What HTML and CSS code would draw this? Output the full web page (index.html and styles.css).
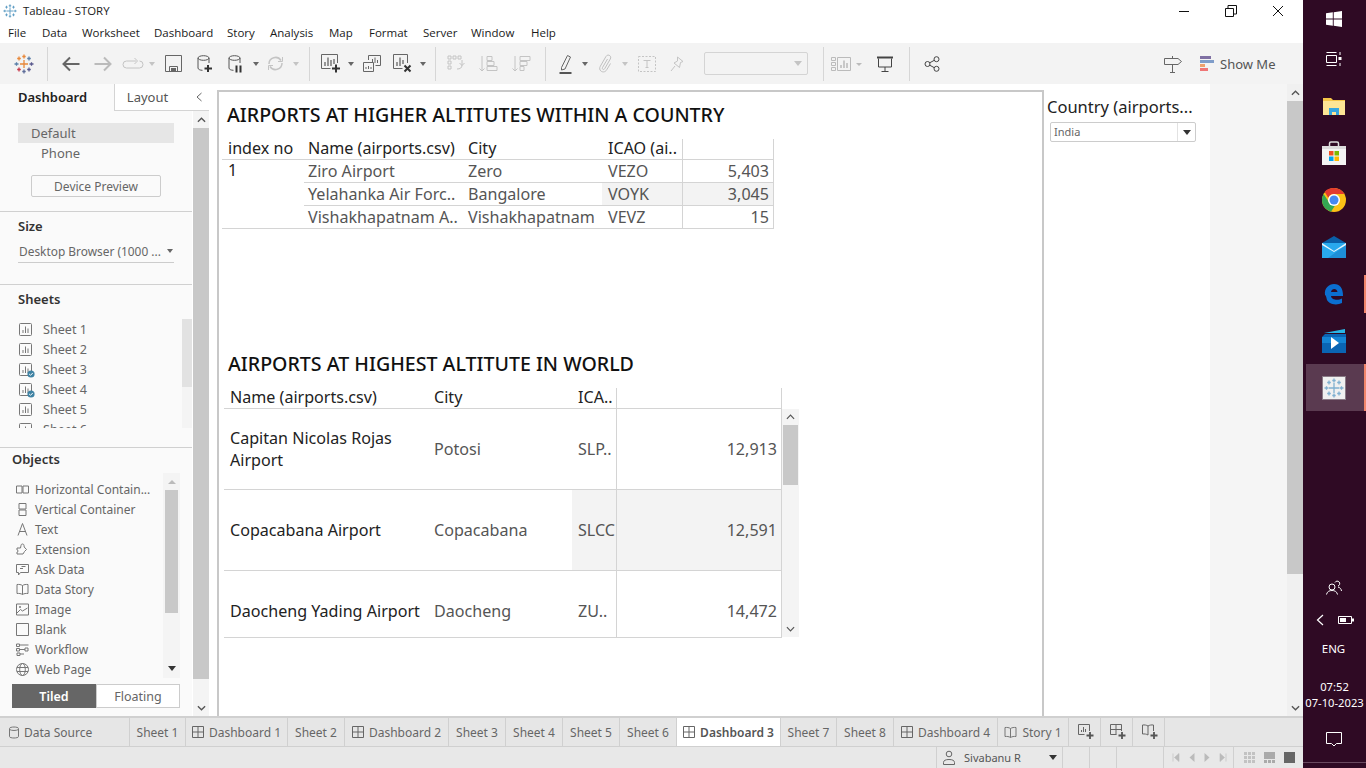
FILE: index.html
```html
<!DOCTYPE html>
<html lang="en">
<head>
<meta charset="utf-8">
<title>Tableau - STORY</title>
<link rel="stylesheet" href="styles.css">
</head>
<body>
<svg class="defs" width="0" height="0" aria-hidden="true">
  <symbol id="bars" viewBox="0 0 13 13"><rect x=".5" y=".5" width="12" height="12" rx="1" fill="none" stroke="#777"/><path d="M4 10V7M6.5 10V3.5M9 10V5.5" stroke="#777" fill="none"/></symbol>
  <symbol id="dash" viewBox="0 0 12 12"><path d="M.5.5h11v11H.5zM6 .5v11M.5 6h11" fill="none" stroke="#666"/></symbol>
  <symbol id="check" viewBox="0 0 8 8"><circle cx="4" cy="4" r="3.6" fill="#3e82a3"/><path d="M2.2 4l1.3 1.3 2.3-2.4" stroke="#fff" fill="none"/></symbol>
  <symbol id="story" viewBox="0 0 13 13"><path d="M6.5 2.5C5 1.500 3 1.300 1 1.500v9c2-.2 4 0 5.500 1 1.500-1 3.500-1.200 5.500-1v-9c-2-.2-4 0-5.500 1zM6.500 2.500v9" fill="none" stroke="#777"/></symbol>
  <symbol id="logo" viewBox="0 0 20 20"><path d="M10 5v10M5 10h10M10 .5v4M8.300 2.500h3.400M10 15.500v4M8.300 17.500h3.400M.5 10h4M2.500 8.300v3.400M15.500 10h4M17.500 8.300v3.400M5 2.500v4M3.200 4.500h3.600M15 2.500v4M13.200 4.500h3.600M5 13.500v4M3.200 15.500h3.600M15 13.500v4M13.200 15.500h3.600" fill="none" stroke="currentColor" stroke-width="1.300"/></symbol>
  <symbol id="cyl" viewBox="0 0 16 18"><ellipse cx="6.500" cy="3" rx="5.500" ry="2.300" fill="none" stroke="#555"/><path d="M1 3v10c0 1.300 2 2.300 4.500 2.300M12 3v5" fill="none" stroke="#555"/></symbol>
</svg>

<div class="screen">
  <div class="app">
    <header class="titlebar">
      <div class="title-left"><svg class="ic20 logo-pale"><use href="#logo"/></svg><span>Tableau - STORY</span></div>
      <div class="winctl">
        <svg class="ic12" viewBox="0 0 12 12"><path d="M1 6.500h10" stroke="#111" fill="none"/></svg>
        <svg class="ic12" viewBox="0 0 12 12"><path d="M.5 3.500h8v8h-8zM3 3.500V.5h8.500v8.500H8.500" stroke="#111" fill="none"/></svg>
        <svg class="ic12" viewBox="0 0 12 12"><path d="M1 1l10 10M11 1L1 11" stroke="#111" fill="none"/></svg>
      </div>
    </header>
    <nav class="menubar">
      <span class="m-file">File</span><span class="m-data">Data</span><span class="m-work">Worksheet</span><span class="m-dash">Dashboard</span><span class="m-story">Story</span><span class="m-ana">Analysis</span><span class="m-map">Map</span><span class="m-fmt">Format</span><span class="m-srv">Server</span><span class="m-win">Window</span><span>Help</span>
    </nav>
    <div class="toolbar">
      <div class="tools">
        <div class="tool"><svg width="20" height="20" viewBox="0 0 20 20"><path d="M10 6v8M6 10h8" stroke="#e8883a" stroke-width="1.300"/><path d="M5 2.500v4M3.200 4.500h3.600M10 .5v4M8.300 2.500h3.400" stroke="#e8883a" stroke-width="1.300"/><path d="M15 2.500v4M13.200 4.500h3.600M.5 10h4M2.500 8.300v3.400" stroke="#5b7fa8" stroke-width="1.300"/><path d="M5 13.500v4M3.200 15.500h3.600" stroke="#c8384a" stroke-width="1.300"/><path d="M10 15.500v4M8.300 17.500h3.400" stroke="#5d6c99" stroke-width="1.300"/><path d="M15 13.500v4M13.200 15.500h3.600M15.500 10h4M17.500 8.300v3.400" stroke="#5b5a8f" stroke-width="1.300"/></svg></div>
        <i class="sep"></i>
        <div class="tool"><svg width="18" height="16" viewBox="0 0 18 16"><path d="M8 1.500L1.500 8 8 14.500M1.500 8h16" fill="none" stroke="#666" stroke-width="2"/></svg></div>
        <div class="tool"><svg width="18" height="16" viewBox="0 0 18 16"><path d="M10 1.500L16.500 8 10 14.500M16.500 8H.5" fill="none" stroke="#bbb" stroke-width="2"/></svg></div>
        <div class="tool"><svg width="20" height="14" viewBox="0 0 20 14"><path d="M13 4H3.500a2.500 2.500 0 0 0 0 7h13a2.500 2.500 0 0 0 0-7M11.500 1l3 3-3 3" fill="none" stroke="#c4c4c4"/></svg></div>
        <div class="tool"><i class="caret off"></i></div>
        <div class="tool"><svg width="17" height="17" viewBox="0 0 17 17"><path d="M.5.5h16v16H.5zM4.500 16.500v-5h8v5" fill="none" stroke="#666"/><path d="M6 13h5v3.500H6z" fill="#666"/></svg></div>
        <div class="tool"><svg width="16" height="18" viewBox="0 0 16 18"><use href="#cyl"/><path d="M11 10v7M7.500 13.500h7.500" stroke="#333" stroke-width="2"/></svg></div>
        <div class="tool"><svg width="16" height="18" viewBox="0 0 16 18"><use href="#cyl"/><path d="M8.500 10.500v7M12.500 10.500v7" stroke="#333" stroke-width="2"/></svg></div>
        <div class="tool"><i class="caret"></i></div>
        <div class="tool"><svg width="17" height="17" viewBox="0 0 17 17"><path d="M2 9a6.500 6.500 0 0 1 12-3.500M15 8a6.500 6.500 0 0 1-12 3.500" fill="none" stroke="#c4c4c4" stroke-width="1.500"/><path d="M15.500 2v4.500H11M1.500 15v-4.500H6" fill="none" stroke="#c4c4c4"/></svg></div>
        <div class="tool"><i class="caret off"></i></div>
        <i class="sep"></i>
        <div class="tool"><svg width="20" height="19" viewBox="0 0 20 19"><path d="M16.500 9V.5H.5v14h9" fill="none" stroke="#666"/><path d="M4 12V8M7 12V3.500M10 12V6M13 10V5" stroke="#666" stroke-width="1.300"/><path d="M15 10.500v8M11 14.500h8" stroke="#333" stroke-width="2"/></svg></div>
        <div class="tool"><i class="caret"></i></div>
        <div class="tool"><svg width="18" height="17" viewBox="0 0 18 17"><path d="M5.500 5V.5h12v10h-5" fill="none" stroke="#666"/><path d="M.5 7.500h10v9H.5z" fill="#f3f3f3" stroke="#666"/><path d="M3 14v-2M5.500 14v-3M8 14v-2M9.500 8V4M12 8V2.500M14.500 8V5" stroke="#666"/></svg></div>
        <div class="tool"><svg width="20" height="19" viewBox="0 0 20 19"><path d="M14.500 9V.5H.5v14h9" fill="none" stroke="#666"/><path d="M4 12V8M7 12V3.500M10 10V6" stroke="#666" stroke-width="1.300"/><path d="M11.500 11.500l6 6M17.500 11.500l-6 6" stroke="#333" stroke-width="2"/></svg></div>
        <div class="tool"><i class="caret"></i></div>
        <i class="sep"></i>
        <div class="tool"><svg width="20" height="18" viewBox="0 0 20 18"><path d="M1 1h3v3H1zM6 1h3v3H6zM11 1h3v3h-3zM1 6h3v3H1zM1 11h3v3H1z" fill="none" stroke="#c4c4c4"/><path d="M15 5v5c0 3-2 4-5 4M12.500 8l2.500 2.500L17.500 8" fill="none" stroke="#c4c4c4"/></svg></div>
        <div class="tool"><svg width="19" height="18" viewBox="0 0 19 18"><path d="M3 1v15M.5 13.500L3 16l2.500-2.500" fill="none" stroke="#c4c4c4"/><path d="M8 1.500h5v4H8zM8 6.500h7v4H8zM8 11.500h10v4H8z" fill="none" stroke="#c4c4c4"/></svg></div>
        <div class="tool"><svg width="19" height="18" viewBox="0 0 19 18"><path d="M3 1v15M.5 13.500L3 16l2.500-2.500" fill="none" stroke="#c4c4c4"/><path d="M8 1.500h10v4H8zM8 6.500h7v4H8zM8 11.500h4v4H8z" fill="none" stroke="#c4c4c4"/></svg></div>
        <i class="sep"></i>
        <div class="tool"><svg width="14" height="20" viewBox="0 0 14 20"><path d="M2.500 13.500L8.500 1.500l3 1.500-5.500 12-3.500 1z" fill="none" stroke="#666"/><path d="M.5 19h12" stroke="#555" stroke-width="2"/></svg></div>
        <div class="tool"><i class="caret"></i></div>
        <div class="tool"><svg width="14" height="20" viewBox="0 0 14 20"><path d="M9.500 5L4.500 13.500c-.9 1.600 1.300 2.800 2.200 1.200L12.300 5c1.800-3.200-2.600-5.600-4.400-2.400L2.300 12.300c-2.600 4.600 3.800 8 6.400 3.500l3.800-6.300" fill="none" stroke="#c0c0c0"/></svg></div>
        <div class="tool"><i class="caret off"></i></div>
        <div class="tool"><svg width="18" height="16" viewBox="0 0 18 16"><path d="M.5.5h17v15H.5z" fill="none" stroke="#c4c4c4" stroke-dasharray="2 1.500"/><path d="M5.500 4.500h7M9 4.500v7M7.500 11.500h3" fill="none" stroke="#c4c4c4"/></svg></div>
        <div class="tool"><svg width="14" height="16" viewBox="0 0 14 16"><path d="M7.500 1l5.500 4.500-2.500 1-1 5-5.500-4.500 3.500-2zM5 10l-4 5" fill="none" stroke="#c4c4c4"/></svg></div>
        <div class="tool"><div class="combo"><i class="caret off"></i></div></div>
        <i class="sep"></i>
        <div class="tool"><svg width="34" height="14" viewBox="0 0 34 14"><path d="M.5.5h4v3h-4zM.5 5.500h4v3h-4zM.5 10.500h4v3h-4zM6.500.5h13v13h-13z" fill="none" stroke="#bbb"/><path d="M10 11V8M13 11V3.500M16 11V6" stroke="#bbb" stroke-width="1.500"/><path d="M25 6h6l-3 3z" fill="#bbb"/></svg></div>
        <div class="tool"><svg width="16" height="16" viewBox="0 0 16 16"><path d="M0 1.500h16" stroke="#444" stroke-width="2"/><path d="M1.500 2.500v8.500h13V2.500M8 11v4M4.500 15.500h7" fill="none" stroke="#444"/></svg></div>
        <i class="sep"></i>
        <div class="tool"><svg width="16" height="16" viewBox="0 0 16 16"><circle cx="3.500" cy="8" r="2.500" fill="none" stroke="#444"/><circle cx="12.500" cy="3.200" r="2.500" fill="none" stroke="#444"/><circle cx="12.500" cy="12.800" r="2.500" fill="none" stroke="#444"/><path d="M5.700 6.800l4.600-2.500M5.700 9.200l4.600 2.500" stroke="#444"/></svg></div>
      </div>
      <div class="tools-right">
        <svg class="sign" width="18" height="18" viewBox="0 0 18 18"><path d="M.5 3.500h13.500l3.500 3-3.500 3H.5zM8.500 1v2.500M8.500 9.500v8M6 17.500h5" fill="none" stroke="#666"/></svg>
        <div class="showme">
          <svg width="14" height="15" viewBox="0 0 14 15"><rect width="11" height="3" fill="#7f70a3"/><rect y="4" width="14" height="3" fill="#7f9dc9"/><rect y="8" width="5" height="3" fill="#eda16e"/><rect y="12" width="8" height="3" fill="#ef7676"/></svg>
          <span>Show Me</span>
        </div>
      </div>
    </div>

    <main class="main">
      <aside class="side">
        <div class="side-tabs">
          <div class="stab stab-on">Dashboard</div>
          <div class="stab stab-off">Layout</div>
          <div class="stab-col"><svg width="8" height="10" viewBox="0 0 8 10"><path d="M6.500 1L2 5l4.500 4" fill="none" stroke="#666"/></svg></div>
        </div>
        <div class="side-body">
          <div class="panels">
            <section class="panel p-dev">
              <div class="dev-on">Default</div>
              <div class="dev-phone">Phone</div>
              <button class="dev-btn">Device Preview</button>
            </section>
            <section class="panel p-size">
              <h3>Size</h3>
              <div class="size-sel"><span>Desktop Browser (1000 ...</span><i class="caret"></i></div>
            </section>
            <section class="panel p-sheets">
              <h3>Sheets</h3>
              <div class="sheet-wrap">
                <ul class="sheet-list">
                  <li><span class="sic"><svg class="ic13"><use href="#bars"/></svg></span>Sheet 1</li>
                  <li><span class="sic"><svg class="ic13"><use href="#bars"/></svg></span>Sheet 2</li>
                  <li><span class="sic"><svg class="ic13"><use href="#bars"/></svg><svg class="badge"><use href="#check"/></svg></span>Sheet 3</li>
                  <li><span class="sic"><svg class="ic13"><use href="#bars"/></svg><svg class="badge"><use href="#check"/></svg></span>Sheet 4</li>
                  <li><span class="sic"><svg class="ic13"><use href="#bars"/></svg></span>Sheet 5</li>
                  <li><span class="sic"><svg class="ic13"><use href="#bars"/></svg></span>Sheet 6</li>
                </ul>
                <div class="mini-track"><div class="mini-thumb"></div></div>
              </div>
            </section>
            <section class="panel p-obj">
              <h3>Objects</h3>
              <div class="obj-wrap">
                <ul class="obj-list">
                  <li><svg class="ic13" viewBox="0 0 13 13"><path d="M.5 3h5.500v7H.5zM7 3h5.500v7H7z" fill="none" stroke="#777"/></svg>Horizontal Contain...</li>
                  <li><svg class="ic13" viewBox="0 0 13 13"><path d="M3 .5h7v5.500H3zM3 7h7v5.500H3z" fill="none" stroke="#777"/></svg>Vertical Container</li>
                  <li><svg class="ic13" viewBox="0 0 13 13"><path d="M2 12.500L6.500.5l4.500 12M3.500 8.500h6" fill="none" stroke="#777"/></svg>Text</li>
                  <li><svg class="ic13" viewBox="0 0 13 13"><path d="M5 2.500c0-2 3-2 3 0l.2 1.500 2.300 2.500-2 2-1.500 2.500H1v-2c1.500 0 1.500-2 0-2V5h3.500z" fill="none" stroke="#777"/></svg>Extension</li>
                  <li><svg class="ic13" viewBox="0 0 13 13"><path d="M.5 1.500h12v8h-8l-2 2.500V9.500h-2zM4 5.500h3M5.500 3.500h4" fill="none" stroke="#777"/></svg>Ask Data</li>
                  <li><svg class="ic13"><use href="#story"/></svg>Data Story</li>
                  <li><svg class="ic13" viewBox="0 0 13 13"><path d="M.5 1h12v11H.5zM1 10l3.500-3.500 2 1.500 5-3" fill="none" stroke="#777"/><circle cx="4" cy="4" r="1" fill="#777"/></svg>Image</li>
                  <li><svg class="ic13" viewBox="0 0 13 13"><path d="M.5.5h12v12H.5z" fill="none" stroke="#777"/></svg>Blank</li>
                  <li><svg class="ic13" viewBox="0 0 13 13"><path d="M.5 1h3v2.500h-3zM.5 5.500h3V8h-3zM1 10h3v2.500H1zM3.500 2h9M3.500 6.500H9M4 11h4M9 5h3v3H9z" fill="none" stroke="#777"/></svg>Workflow</li>
                  <li><svg class="ic13" viewBox="0 0 13 13"><circle cx="6.500" cy="6.500" r="6" fill="none" stroke="#777"/><ellipse cx="6.500" cy="6.500" rx="2.800" ry="6" fill="none" stroke="#777"/><path d="M1 4.500h11M1 8.500h11" stroke="#777"/></svg>Web Page</li>
                </ul>
                <div class="obj-scroll">
                  <i class="tri-up"></i>
                  <div class="obj-thumb"></div>
                  <i class="caret dark"></i>
                </div>
              </div>
              <div class="seg"><div class="seg-on">Tiled</div><div class="seg-off">Floating</div></div>
            </section>
          </div>
          <div class="vscroll side-scroll">
            <svg class="chev" viewBox="0 0 10 6"><path d="M1 5l4-4 4 4" fill="none" stroke="#555" stroke-width="1.500"/></svg>
            <div class="thumb side-thumb"></div>
            <svg class="chev chev-b" viewBox="0 0 10 6"><path d="M1 1l4 4 4-4" fill="none" stroke="#555" stroke-width="1.500"/></svg>
          </div>
        </div>
      </aside>

      <div class="canvas">
        <h2 class="vtitle t1">AIRPORTS AT HIGHER ALTITUTES WITHIN A COUNTRY</h2>
        <div class="tbl1">
          <div class="c hd">index no</div><div class="c hd">Name (airports.csv)</div><div class="c hd">City</div><div class="c hd ic">ICAO (ai..</div><div class="c hd val"></div>
          <div class="c idx">1</div>
          <div class="c">Ziro Airport</div><div class="c">Zero</div><div class="c ic">VEZO</div><div class="c val">5,403</div>
          <div class="c">Yelahanka Air Forc..</div><div class="c">Bangalore</div><div class="c ic hov">VOYK</div><div class="c val hov">3,045</div>
          <div class="c">Vishakhapatnam A..</div><div class="c">Vishakhapatnam</div><div class="c ic">VEVZ</div><div class="c val">15</div>
        </div>
        <h2 class="vtitle t2">AIRPORTS AT HIGHEST ALTITUTE IN WORLD</h2>
        <div class="tbl2-wrap">
          <div class="tbl2">
            <div class="d hd">Name (airports.csv)</div><div class="d hd">City</div><div class="d hd">ICA..</div><div class="d hd dval"></div>
            <div class="d nm r1">Capitan Nicolas Rojas Airport</div><div class="d ct r1">Potosi</div><div class="d ct r1">SLP..</div><div class="d ct dval r1">12,913</div>
            <div class="d nm r1">Copacabana Airport</div><div class="d ct r1">Copacabana</div><div class="d ct r1 hov">SLCC</div><div class="d ct dval r1 hov">12,591</div>
            <div class="d nm r3">Daocheng Yading Airport</div><div class="d ct r3">Daocheng</div><div class="d ct r3">ZU..</div><div class="d ct dval r3">14,472</div>
          </div>
          <div class="tscroll">
            <svg class="chev" viewBox="0 0 10 6"><path d="M1 5l4-4 4 4" fill="none" stroke="#555" stroke-width="1.300"/></svg>
            <div class="tscroll-thumb"></div>
            <svg class="chev chev-b" viewBox="0 0 10 6"><path d="M1 1l4 4 4-4" fill="none" stroke="#555" stroke-width="1.300"/></svg>
          </div>
        </div>
      </div>

      <div class="filter">
        <div class="f-title">Country (airports...</div>
        <div class="f-sel"><span class="f-val">India</span><span class="f-btn"><i class="caret dark"></i></span></div>
      </div>
      <div class="gutter"></div>
      <div class="vscroll page-scroll">
        <svg class="chev" viewBox="0 0 10 6"><path d="M1 5l4-4 4 4" fill="none" stroke="#555" stroke-width="1.500"/></svg>
        <div class="thumb page-thumb"></div>
        <svg class="chev chev-b" viewBox="0 0 10 6"><path d="M1 1l4 4 4-4" fill="none" stroke="#555" stroke-width="1.500"/></svg>
      </div>
    </main>

    <div class="tabs">
      <div class="tab t-src"><svg width="10" height="13" viewBox="0 0 10 13"><path d="M.5 2.500C.5.500 9.500.500 9.500 2.500v8c0 2-9 2-9 0zM.5 3.500c2 1.300 7 1.300 9 0" fill="none" stroke="#777"/></svg>Data Source</div>
      <div class="tab t-s1">Sheet 1</div>
      <div class="tab t-d1"><svg class="ic12"><use href="#dash"/></svg>Dashboard 1</div>
      <div class="tab t-s">Sheet 2</div>
      <div class="tab t-d"><svg class="ic12"><use href="#dash"/></svg>Dashboard 2</div>
      <div class="tab t-s">Sheet 3</div>
      <div class="tab t-s">Sheet 4</div>
      <div class="tab t-s">Sheet 5</div>
      <div class="tab t-s">Sheet 6</div>
      <div class="tab t-d t-on"><svg class="ic12"><use href="#dash"/></svg>Dashboard 3</div>
      <div class="tab t-s1">Sheet 7</div>
      <div class="tab t-s">Sheet 8</div>
      <div class="tab t-d"><svg class="ic12"><use href="#dash"/></svg>Dashboard 4</div>
      <div class="tab t-st"><svg class="ic13"><use href="#story"/></svg>Story 1</div>
      <div class="tab t-add"><svg width="16" height="16" viewBox="0 0 16 16"><path d="M11.500 7V.5H.5v10h6" fill="none" stroke="#666"/><path d="M3.500 8V6M5.500 8V3M7.500 8V5" stroke="#666"/><path d="M12 8v7M8.500 11.500h7" stroke="#555" stroke-width="1.800"/></svg></div>
      <div class="tab t-add"><svg width="16" height="16" viewBox="0 0 16 16"><path d="M11.500 7V.5H.5v10h6M6 .5v10M.5 5.500h11" fill="none" stroke="#666"/><path d="M12 8v7M8.500 11.500h7" stroke="#555" stroke-width="1.800"/></svg></div>
      <div class="tab t-add"><svg width="16" height="16" viewBox="0 0 16 16"><path d="M6 2C4.500 1 2.500.8.500 1v9c2-.2 4 0 5.500 1M6 2c1.500-1 3.500-1.200 5.500-1v6M6 2v9" fill="none" stroke="#666"/><path d="M12 8v7M8.500 11.500h7" stroke="#555" stroke-width="1.800"/></svg></div>
    </div>
    <footer class="status">
      <div class="st-user">
        <svg width="14" height="15" viewBox="0 0 14 15"><circle cx="7" cy="4" r="2.800" fill="none" stroke="#666"/><path d="M1.500 14.500v-2c0-2 2-3 5.500-3s5.500 1 5.500 3v2z" fill="none" stroke="#666"/></svg>
        <span>Sivabanu R</span><i class="caret dark"></i>
      </div>
      <div class="st-cell"></div>
      <div class="st-cell"></div>
      <div class="st-cell st-wide"></div>
      <div class="st-nav">
        <svg width="8" height="9" viewBox="0 0 8 9"><path d="M1 .5v8M7 .5v8L2.500 4.500z" fill="#bbb" stroke="#bbb" stroke-width=".6"/></svg>
        <svg width="6" height="9" viewBox="0 0 6 9"><path d="M5.500 0v9L.5 4.500z" fill="#bbb"/></svg>
        <svg width="6" height="9" viewBox="0 0 6 9"><path d="M.5 0v9l5-4.500z" fill="#bbb"/></svg>
        <svg width="8" height="9" viewBox="0 0 8 9"><path d="M7 .5v8M1 .5v8l4.500-4z" fill="#bbb" stroke="#bbb" stroke-width=".6"/></svg>
      </div>
      <div class="st-views">
        <svg width="11" height="11" viewBox="0 0 11 11"><path d="M0 0h3v3H0zM4 0h3v3H4zM8 0h3v3H8zM0 4h3v3H0zM4 4h3v3H4zM8 4h3v3H8zM0 8h3v3H0zM4 8h3v3H4zM8 8h3v3H8z" fill="#c2c2c2"/></svg>
        <svg width="11" height="11" viewBox="0 0 11 11"><path d="M0 0h11v7H0zM0 8h3v3H0zM4 8h3v3H4zM8 8h3v3H8z" fill="#aaa"/></svg>
        <svg width="11" height="11" viewBox="0 0 11 11"><path d="M0 0h11v11H0z" fill="#666"/></svg>
      </div>
    </footer>
  </div>

  <aside class="taskbar">
    <div class="tile tile-start"><svg width="16" height="16" viewBox="0 0 16 16"><path d="M0 2.300L6.800 1.300v6.300H0zM7.700 1.200L16 0v7.600H7.700zM0 8.400h6.800v6.300L0 13.700zM7.700 8.400H16V16l-8.300-1.200z" fill="#fff"/></svg></div>
    <div class="tile"><svg width="16" height="16" viewBox="0 0 16 16"><path d="M.5 4.500h10v7H.5zM.5 1.500h10M.5 14.500h10M14 1v3M14 12v3" fill="none" stroke="#fff"/><rect x="12.500" y="6" width="3" height="3" fill="#fff"/></svg></div>
    <div class="tile"><svg width="22" height="18" viewBox="0 0 22 18"><path d="M0 1h8l2 2h12v15H0z" fill="#f5c648"/><path d="M0 4h22v14H0z" fill="#fde595"/><path d="M6 11h10v7h-3v-3H9v3H6z" fill="#35a7e0"/></svg></div>
    <div class="tile"><svg width="24" height="24" viewBox="0 0 24 24"><path d="M7.500 5V2.500a1.500 1.500 0 0 1 1.500-1.500h6a1.500 1.500 0 0 1 1.500 1.500V5" fill="none" stroke="#ddd" stroke-width="1.500"/><path d="M0 5h24v19H0z" fill="#f4f4f4"/><path d="M0 5h24v3H0z" fill="#dcdcdc"/><path d="M7 10h4.500v4.500H7z" fill="#f25022"/><path d="M12.500 10H17v4.500h-4.500z" fill="#7fba00"/><path d="M7 15.500h4.500V20H7z" fill="#00a4ef"/><path d="M12.500 15.500H17V20h-4.500z" fill="#ffb900"/></svg></div>
    <div class="tile"><svg width="24" height="24" viewBox="0 0 48 48"><circle cx="24" cy="24" r="24" fill="#fbc116"/><path d="M24 0a24 24 0 0 1 20.800 12H24a12 12 0 0 0-11.300 8L5.200 7.500A24 24 0 0 1 24 0z" fill="#e33b2e"/><path d="M3.200 12A24 24 0 0 0 18 47.300l9-13.800a12 12 0 0 1-14.300-7z" fill="#34a853"/><circle cx="24" cy="24" r="12" fill="#fff"/><circle cx="24" cy="24" r="9" fill="#4688f1"/></svg></div>
    <div class="tile"><svg width="24" height="22" viewBox="0 0 24 22"><path d="M12 0l12 7v15H0V7z" fill="#0a5fa8"/><path d="M0 7h24v15H0z" fill="#29a9ee"/><path d="M24 9v13H6z" fill="#1e8fd8"/><path d="M0 7l12 8 12-8v2l-12 7L0 9z" fill="#e8f5fd"/></svg></div>
    <div class="tile tile-open"><svg width="20" height="22" viewBox="0 0 20 22"><path d="M1 12C0 5 5 1 10 1c6 0 9 4 9 12H7c.5 4 7 5 11 2.500V20c-6 3-15 1-15.500-5C2 13 1.500 12 1 12zM7 9h6.500C13 5 7.500 5 7 9z" fill="#0b6fd1"/></svg></div>
    <div class="tile"><svg width="24" height="24" viewBox="0 0 24 24"><path d="M2 4l21-4v4z" fill="#29b6e6"/><path d="M0 8l3-3h21v19H0z" fill="#0a64b3"/><path d="M0 8h24v6H0z" fill="#1484d4"/><path d="M9 8v12l8-6z" fill="#fff"/></svg></div>
    <div class="tile tile-active"><div class="tb-app"><svg width="20" height="20" viewBox="0 0 20 20" class="logo-pale2"><use href="#logo"/></svg></div></div>
    <div class="tb-spacer"></div>
    <div class="tb-people"><svg width="16" height="15" viewBox="0 0 16 15"><circle cx="6" cy="7" r="3" fill="none" stroke="#fff"/><path d="M.5 14.500c.5-3 3-4 5.500-4s5 1 5.500 4M9 2.500a2.500 2.500 0 1 1 3 3.500M12 7c2 .5 3.300 2 3.500 4" fill="none" stroke="#fff"/></svg></div>
    <div class="tb-tray">
      <svg width="8" height="12" viewBox="0 0 8 12"><path d="M7 1L1.500 6 7 11" fill="none" stroke="#fff" stroke-width="1.200"/></svg>
      <svg width="16" height="8" viewBox="0 0 16 8"><path d="M.5.5h13v7H.5z" fill="none" stroke="#fff"/><path d="M2 2h6v4H2zM14 2.500h2v3h-2z" fill="#fff"/></svg>
    </div>
    <div class="tb-eng">ENG</div>
    <div class="tb-clock"><div>07:52</div><div>07-10-2023</div></div>
    <div class="tb-note"><svg width="16" height="15" viewBox="0 0 16 15"><path d="M.5.5h15v11h-5L8 14l-2.500-2.500h-5z" fill="none" stroke="#fff"/></svg></div>
  </aside>
</div>
</body>
</html>
```

FILE: styles.css
```css
* { box-sizing: border-box; }
html, body { margin: 0; padding: 0; }
body { width: 1366px; height: 768px; overflow: hidden; background: #fff; font-family: "Noto Sans", "Open Sans", sans-serif; color: #555; }
.defs { position: absolute; }
h2, h3, ul { margin: 0; padding: 0; }
ul { list-style: none; }
i { display: block; font-style: normal; }
svg { display: block; flex: none; overflow: visible; }

.screen { display: flex; width: 1366px; height: 768px; }
.app { width: 1303px; height: 768px; display: flex; flex-direction: column; flex: none; }

/* title + menu */
.titlebar { height: 21px; display: flex; justify-content: space-between; align-items: center; background: #fff; }
.title-left { display: flex; align-items: center; gap: 6px; padding-left: 3px; font: 11.400px "Open Sans", sans-serif; color: #222; }
.title-left .ic20 { width: 14px; height: 14px; }
.logo-pale { color: #5b9ac2; }
.logo-pale2 { color: #7fb0d0; }
.winctl { display: flex; gap: 35px; padding-right: 19px; align-items: center; }
.ic12 { width: 12px; height: 12px; }
.ic13 { width: 13px; height: 13px; }
.menubar { height: 22px; display: flex; align-items: center; padding-left: 8px; font: 11.500px "Open Sans", sans-serif; color: #1a1a1a; }
.menubar span { flex: none; }
.m-file { width: 34px; } .m-data { width: 40px; } .m-work { width: 72px; } .m-dash { width: 73px; } .m-story { width: 43px; }
.m-ana { width: 59px; } .m-map { width: 40px; } .m-fmt { width: 54px; } .m-srv { width: 48px; } .m-win { width: 60px; }

/* toolbar */
.toolbar { height: 41px; background: #f3f3f3; display: flex; justify-content: space-between; align-items: center; }
.tools { display: grid; height: 34px; padding-left: 8px; align-items: center;
  grid-template-columns: 32px 15px 31px 34px 25px 14px 29px 33px 29px 12px 27px 14px 13px 29px 11px 32px 29px 11px 14px 30px 33px 32px 16px 26px 12px 27px 14px 30px 30px 128px 7px 42px 32px 16px 30px; }
.tool { display: flex; justify-content: center; align-items: center; }
.sep { width: 1px; height: 34px; background: #d6d6d6; justify-self: center; }
.caret { width: 0; height: 0; border-left: 3.500px solid transparent; border-right: 3.500px solid transparent; border-top: 4px solid #666; }
.caret.off { border-top-color: #c4c4c4; }
.caret.dark { border-left-width: 4px; border-right-width: 4px; border-top: 5px solid #333; }
.combo { width: 104px; height: 23px; border: 1px solid #d4d4d4; border-radius: 2px; display: flex; justify-content: flex-end; align-items: center; padding-right: 5px; }
.combo .caret { border-left-width: 4px; border-right-width: 4px; border-top-width: 5px; }
.tools-right { display: flex; align-items: center; width: 147px; gap: 18px; padding-left: 8px; }
.showme { display: flex; align-items: center; gap: 6px; font-size: 13px; color: #555; }

/* main */
.main { height: 632px; display: flex; background: #fff; }
.side { width: 217px; flex: none; display: flex; flex-direction: column; padding-right: 8px; }
.side-tabs { height: 27px; display: flex; flex: none; }
.stab { height: 27px; display: flex; align-items: center; font-size: 13px; }
.stab-on { width: 114px; padding: 0 0 2px 18px; font-weight: 600; color: #222; background: #fafafa; }
.stab-off { width: 70px; justify-content: center; color: #555; border-left: 1px solid #d4d4d4; border-bottom: 1px solid #d4d4d4; padding-right: 4px; }
.stab-col { width: 25px; display: flex; justify-content: center; align-items: center; border-bottom: 1px solid #d4d4d4; padding-left: 5px; }
.side-body { flex: 1; display: flex; min-height: 0; }
.panels { width: 192px; flex: none; background: #fafafa; display: flex; flex-direction: column; }
.panel { border-bottom: 1px solid #d0d0d0; flex: none; }
.panel h3 { font-size: 13px; font-weight: 600; color: #333; line-height: 18px; padding-left: 18px; }
.p-dev { height: 101px; padding-top: 12px; }
.dev-on { margin: 0 18px; height: 20px; background: #e6e6e6; padding-left: 13px; font-size: 13px; line-height: 20px; color: #666; }
.dev-phone { height: 20px; padding-left: 41px; font-size: 13px; line-height: 20px; color: #666; }
.dev-btn { display: block; margin: 12px 0 0 31px; width: 130px; height: 22px; border: 1px solid #ccc; border-radius: 2px; background: #fafafa; font: 12px "Noto Sans", sans-serif; color: #666; padding: 0; }
.p-size { height: 73px; padding-top: 5px; }
.size-sel { margin: 5px 18px 0; padding: 0 1px; height: 23px; border-bottom: 1px solid #ccc; display: flex; justify-content: space-between; align-items: center; font-size: 11.900px; color: #666; }
.size-sel span { white-space: nowrap; }
.p-sheets { height: 163px; padding-top: 5px; }
.sheet-wrap { margin-top: 11px; height: 109px; display: flex; overflow: hidden; justify-content: space-between; }
.sheet-list li { height: 20px; display: flex; align-items: center; padding-left: 19px; font-size: 12.600px; color: #666; }
.sic { position: relative; width: 24px; flex: none; }
.badge { position: absolute; left: 8px; top: 7px; width: 8px; height: 8px; }
.mini-track { width: 10px; height: 109px; background: #f4f4f4; }
.mini-thumb { height: 68px; background: #e2e2e2; }
.p-obj { flex: 1; border-bottom: 0; padding-top: 2px; }
.p-obj h3 { padding-left: 12px; }
.obj-wrap { margin: 5px 12px 0 0; padding-left: 16px; display: flex; justify-content: space-between; height: 205px; }
.obj-list { padding-top: 6px; width: 147px; }
.obj-list li { height: 20px; display: flex; align-items: center; gap: 6px; font-size: 12px; color: #666; white-space: nowrap; }
.obj-scroll { width: 17px; background: #f4f4f4; display: flex; flex-direction: column; align-items: center; padding-top: 7px; }
.tri-up { width: 0; height: 0; border-left: 4px solid transparent; border-right: 4px solid transparent; border-bottom: 4px solid #bbb; }
.obj-thumb { width: 13px; height: 123px; margin-top: 6px; background: #c8c8c8; margin-bottom: 53px; }
.seg { margin: 6px 0 0 12px; width: 168px; height: 24px; display: flex; font-size: 12.500px; }
.seg-on { width: 84px; background: #666; color: #fff; font-weight: 600; display: flex; align-items: center; justify-content: center; }
.seg-off { flex: 1; border: 1px solid #ccc; background: #fff; color: #666; display: flex; align-items: center; justify-content: center; }

.vscroll { width: 16px; flex: none; display: flex; flex-direction: column; align-items: center; background: #f4f4f4; }
.chev { width: 9px; height: 6px; margin: 6px 0 5px; flex: none; }
.thumb { width: 100%; background: #c8c8c8; flex: none; }
.chev-b { margin: auto 0 5px; }
.side-scroll { margin-left: 1px; }
.side-thumb { height: 551px; }
.page-thumb { height: 473px; }

/* dashboard */
.canvas { width: 827px; flex: none; margin-top: 6px; border: 2px solid #c8c8c8; border-bottom: 0; background: #fff; }
.vtitle { font-weight: 500; font-size: 19.600px; color: #111; line-height: 24px; white-space: nowrap; }
.t1 { margin: 11px 0 0 8px; }
.t2 { margin: 123px 0 0 9px; }
.tbl1 { margin: 12px 0 0 3px; width: 552px; display: grid; grid-template-columns: 82px 160px 138px 80px 92px; grid-template-rows: 21px 23px 23px 23px; font-size: 16.100px; color: #555; }
.c { padding-left: 4px; white-space: nowrap; border-bottom: 1px solid #d4d4d4; line-height: 22px; }
.c.ic { padding-left: 6px; }
.c.hd { color: #222; line-height: 19px; }
.tbl1 .c.hd:first-child { padding-left: 6px; }
.tbl1 .c.val { text-align: right; padding-right: 4px; border-left: 1px solid #d4d4d4; border-right: 1px solid #d4d4d4; }
.idx { grid-row: span 3; padding-left: 6px; color: #222; line-height: 20px; }
.hov { background: #f3f3f3; }
.tbl2-wrap { margin: 12px 0 0 5px; position: relative; width: 575px; height: 249px; }
.tbl2 { width: 558px; display: grid; grid-template-columns: 204px 144px 44px 166px; grid-template-rows: 21px 81px 81px 67px; font-size: 16.100px; }
.d { padding-left: 6px; border-bottom: 1px solid #d4d4d4; display: flex; align-items: center; white-space: nowrap; }
.d.hd { color: #222; align-items: flex-start; line-height: 19px; }
.d.nm { color: #222; white-space: normal; line-height: 22px; }
.d.ct { color: #555; }
.d.dval { justify-content: flex-end; padding-right: 4px; border-left: 1px solid #d4d4d4; border-right: 1px solid #d4d4d4; }
.d.r3 { align-items: flex-start; padding-top: 29px; }
.tscroll { position: absolute; left: 558px; top: 21px; width: 17px; height: 228px; background: #f4f4f4; display: flex; flex-direction: column; align-items: center; }
.tscroll .chev { margin: 5px 0 5px; }
.tscroll .chev-b { margin: auto 0 5px; }
.tscroll-thumb { width: 15px; height: 60px; background: #c8c8c8; }

.filter { width: 166px; flex: none; padding: 13px 0 0 3px; }
.f-title { font-size: 16.500px; color: #222; line-height: 20px; white-space: nowrap; }
.f-sel { margin: 5px 0 0 3px; width: 146px; height: 20px; border: 1px solid #ccc; border-radius: 2px; display: flex; font-size: 11px; color: #666; }
.f-val { flex: 1; padding-left: 3px; line-height: 18px; }
.f-btn { width: 18px; border-left: 1px solid #e2e2e2; display: flex; align-items: center; justify-content: center; }
.gutter { width: 77px; flex: none; background: #f5f5f5; }
.page-scroll { background: #f0f0f0; }

/* tabs */
.tabs { height: 31px; display: flex; background: #e6e6e6; border-top: 2px solid #d0d0d0; border-bottom: 1px solid #d0d0d0; flex: none; }
.tab { flex: none; display: flex; align-items: center; justify-content: center; gap: 5px; font-size: 12px; color: #666; border-right: 1px solid #d0d0d0; white-space: nowrap; }
.t-src { width: 130px; justify-content: flex-start; padding-left: 9px; gap: 5px; }
.t-s1 { width: 56px; } .t-s { width: 57px; } .t-d1 { width: 102px; } .t-d { width: 104px; } .t-st { width: 71px; } .t-add { width: 32px; padding-left: 3px; }
.t-on { background: #fff; font-weight: 600; color: #555; }
.status { flex: 1; display: flex; background: #e8e8e8; align-items: center; padding-left: 936px; font-size: 11px; color: #555; }
.status > div { height: 100%; flex: none; }
.st-user { width: 127px; border-left: 1px solid #d0d0d0; border-right: 1px solid #d0d0d0; display: flex; align-items: center; padding-left: 5px; gap: 8px; }
.st-user span { width: 77px; }
.st-cell { width: 27px; border-right: 1px solid #d0d0d0; }
.st-wide { width: 47px; }
.st-nav { width: 70px; border-right: 1px solid #d0d0d0; display: flex; align-items: center; padding-left: 8px; gap: 9px; }
.st-views { display: flex; align-items: center; padding-left: 10px; gap: 9px; }

/* windows taskbar */
.taskbar { width: 63px; flex: none; background: #2f0a24; display: flex; flex-direction: column; align-items: stretch; color: #fff; font-family: "Noto Sans", sans-serif; }
.tile { height: 47px; display: flex; align-items: center; justify-content: center; flex: none; position: relative; padding-right: 2px; }
.tile-start { height: 35px; padding-top: 3px; }
.tile-open::after, .tile-active::after { content: ""; position: absolute; right: 0; width: 2px; background: #f0846a; }
.tile-open::after { top: 5px; height: 38px; }
.tile-active { background: #5a3a50; margin-left: 3px; padding-right: 5px; padding-left: 0; }
.tile-active::after { top: 0; height: 47px; }
.tb-app { width: 24px; height: 24px; background: #f0f0f0; border: 1px solid #8a7a86; display: flex; align-items: center; justify-content: center; }
.tb-spacer { flex: 1; }
.tb-people { height: 30px; display: flex; align-items: center; justify-content: center; padding-right: 2px; }
.tb-tray { height: 36px; display: flex; align-items: center; justify-content: space-between; padding: 0 12px 0 13px; }
.tb-eng { height: 22px; font-size: 11.500px; line-height: 22px; text-align: center; padding-right: 2px; margin-bottom: 19px; }
.tb-clock { font-size: 11.200px; line-height: 16px; text-align: center; white-space: nowrap; height: 32px; }
.tb-note { height: 52px; display: flex; align-items: flex-start; justify-content: center; padding: 21px 2px 0 0; margin-bottom: 5px; border-bottom: 1px solid #6a4a60; }
```
